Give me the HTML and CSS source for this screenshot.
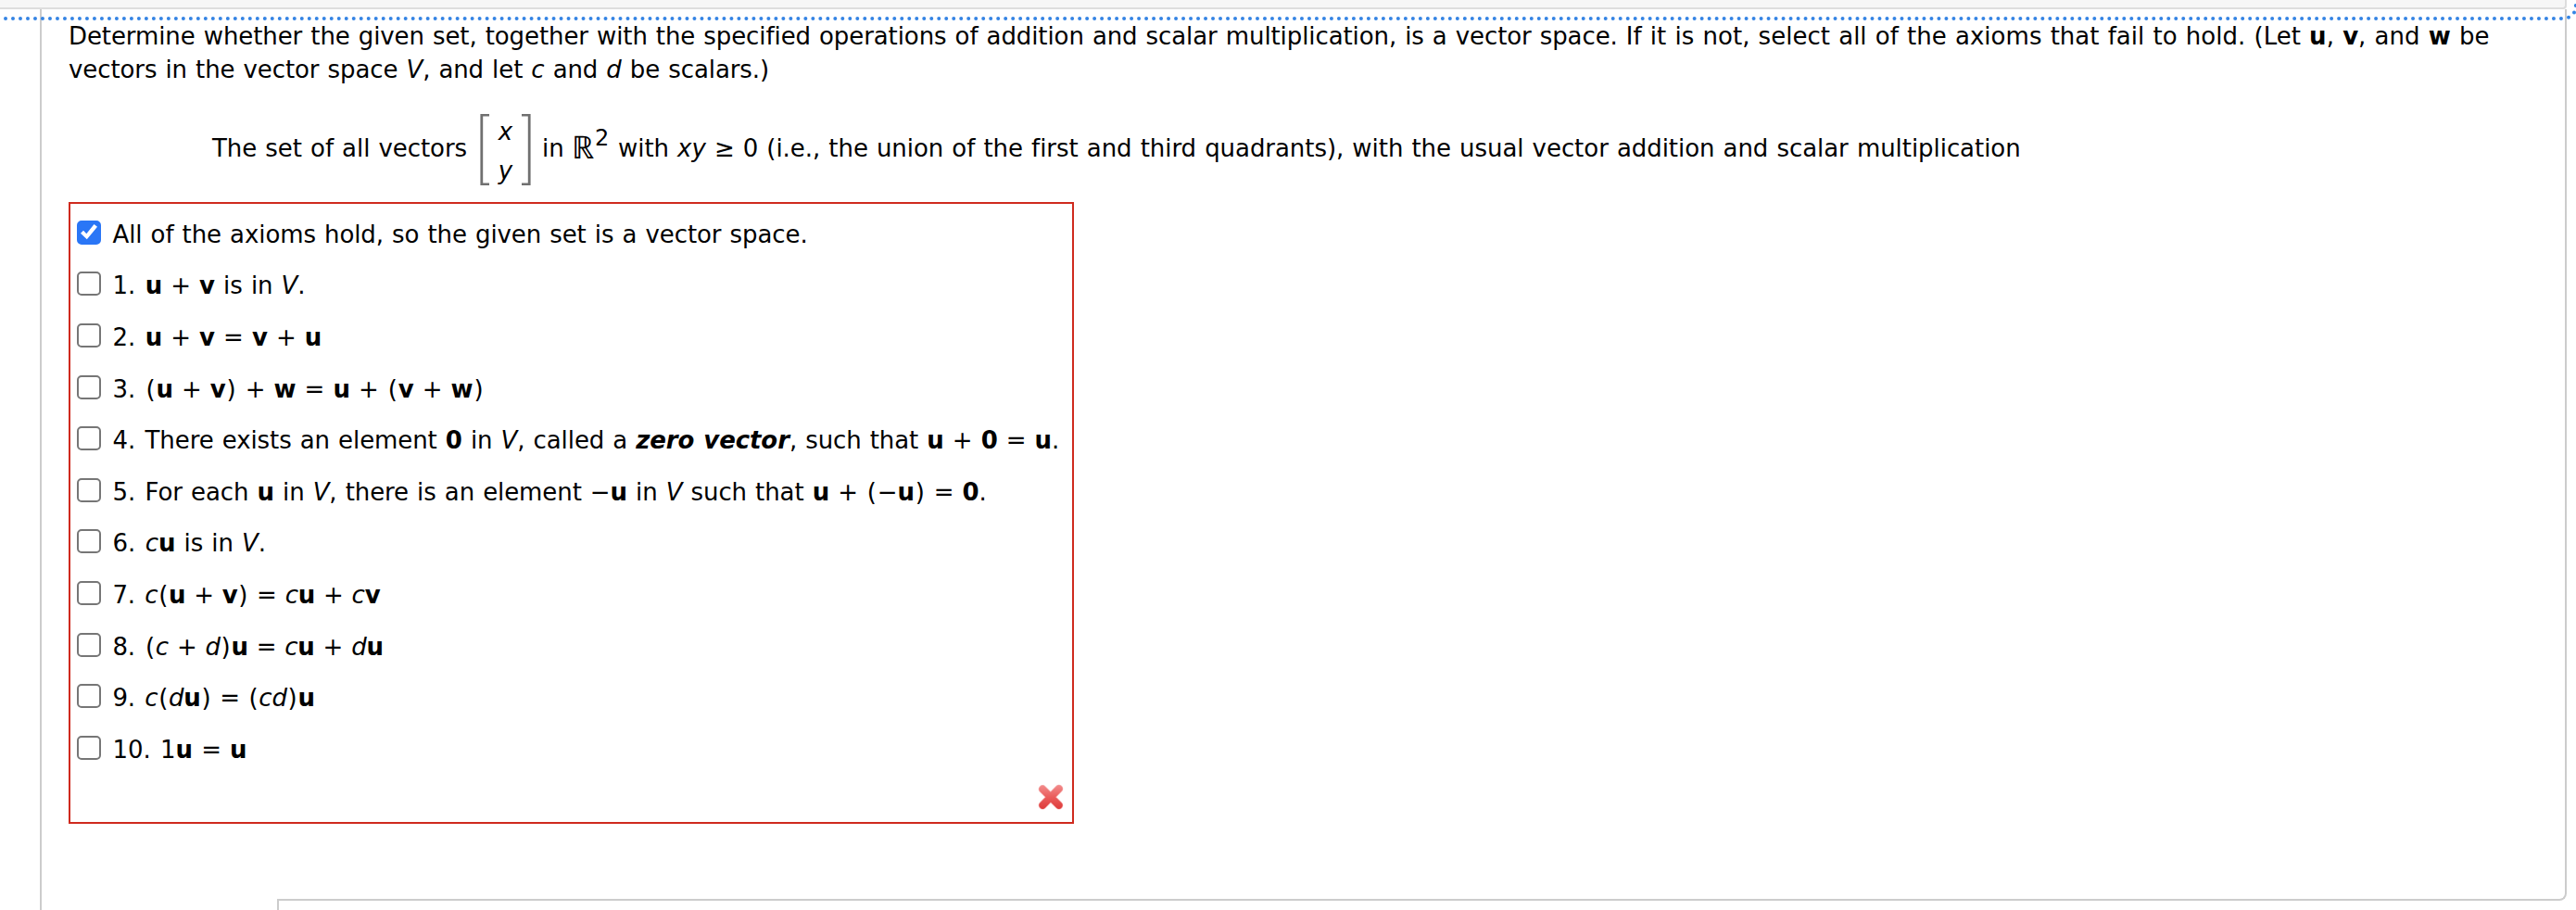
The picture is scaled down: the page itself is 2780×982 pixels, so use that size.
FILE: index.html
```
<!DOCTYPE html>
<html lang="en">
<head>
<meta charset="utf-8">
<title>Vector space axioms</title>
<link rel="stylesheet" href="styles.css">
</head>
<body>
<div class="toolbar"></div>
<main class="question">
  <p class="prompt">Determine whether the given set, together with the specified operations of addition and scalar multiplication, is a vector space. <span class="loose">If it is not, select all of the axioms that fail to hold. (Let <b>u</b>, <b>v</b>, and <b>w</b> be</span><br>vectors in the vector space <i>V</i>, and let <i>c</i> and <i>d</i> be scalars.)</p>
  <div class="formula">
    <span class="lead">The set of all vectors</span>
    <span class="matrix">
      <svg class="bracket" viewBox="0 0 10 77"><path d="M10 1.2H1.8V75.8H10"/></svg>
      <span class="entries"><i>x</i><i>y</i></span>
      <svg class="bracket" viewBox="0 0 10 77"><path d="M0 1.2H8.2V75.8H0"/></svg>
    </span>
    <span class="in">in</span>
    <span class="reals">ℝ</span>
    <span class="power">2</span>
    <span class="rest">with <i>xy</i> ≥ 0 (i.e., the union of the first and third quadrants), with the usual vector addition and scalar multiplication</span>
  </div>
  <div class="answers">
    <label><input type="checkbox" checked><span class="tight">All of the axioms hold, so the given set is a vector space.</span></label>
    <label><input type="checkbox"><span><span class="n">1.</span> <b>u</b> + <b>v</b> is in <i>V</i>.</span></label>
    <label><input type="checkbox"><span><span class="n">2.</span> <b>u</b> + <b>v</b> = <b>v</b> + <b>u</b></span></label>
    <label><input type="checkbox"><span><span class="n">3.</span> <s>(</s><b>u</b> + <b>v</b><s>)</s> + <b>w</b> = <b>u</b> + <s>(</s><b>v</b> + <b>w</b><s>)</s></span></label>
    <label><input type="checkbox"><span class="tight"><span class="n">4.</span> There exists an element <b>0</b> in <i>V</i>, called a <b><i>zero vector</i></b>, such that <b>u</b> + <b>0</b> = <b>u</b>.</span></label>
    <label><input type="checkbox"><span class="tight"><span class="n">5.</span> For each <b>u</b> in <i>V</i>, there is an element −<b>u</b> in <i>V</i> such that <b>u</b> + <s>(</s>−<b>u</b><s>)</s> = <b>0</b>.</span></label>
    <label><input type="checkbox"><span><span class="n">6.</span> <i>c</i><b>u</b> is in <i>V</i>.</span></label>
    <label><input type="checkbox"><span class="tighter"><span class="n">7.</span> <i>c</i><s>(</s><b>u</b> + <b>v</b><s>)</s> = <i>c</i><b>u</b> + <i>c</i><b>v</b></span></label>
    <label><input type="checkbox"><span class="tighter"><span class="n">8.</span> <s>(</s><i>c</i> + <i>d</i><s>)</s><b>u</b> = <i>c</i><b>u</b> + <i>d</i><b>u</b></span></label>
    <label><input type="checkbox"><span class="tighter"><span class="n">9.</span> <i>c</i><s>(</s><i>d</i><b>u</b><s>)</s> = <s>(</s><i>cd</i><s>)</s><b>u</b></span></label>
    <label><input type="checkbox"><span><span class="n">10.</span> 1<b>u</b> = <b>u</b></span></label>
    <svg class="wrong" viewBox="0 0 28 28">
      <defs><linearGradient id="red" x1="0" y1="0" x2="0" y2="28" gradientUnits="userSpaceOnUse"><stop offset="0" stop-color="#f39090"/><stop offset=".5" stop-color="#ea5d5c"/><stop offset="1" stop-color="#dd3837"/></linearGradient></defs>
      <path class="edge" d="M5.2 5.6 22.8 23M22.8 5.2 5.2 23"/>
      <path class="core" d="M5.2 5.6 22.8 23M22.8 5.2 5.2 23"/>
    </svg>
  </div>
</main>
<div class="foot"><div class="rail"></div><div class="corner"></div></div>
<div class="foot last"><div class="rail"></div><div class="next"></div></div>
<svg class="focus" viewBox="0 0 2780 30">
  <path d="M6 20H2765"/>
  <path d="M2772 18.8h0M2778 13.6h0M2779.8 6h0"/>
</svg>
</body>
</html>
```
FILE: styles.css
```
* { box-sizing: border-box; }
html, body { margin: 0; height: 982px; overflow: hidden; background: #fff; }
body {
  position: relative;
  font: 26px/36px "DejaVu Sans", Verdana, sans-serif;
  letter-spacing: -0.05px;
  word-spacing: 0.9px;
  color: #000;
  white-space: nowrap;
}
.toolbar {
  width: 2770px;
  height: 10px;
  background: #f6f6f6;
  border: solid #ddd;
  border-width: 0 2px 2px 0;
  border-bottom-right-radius: 4px;
}
.question {
  width: 2727px;
  height: 952px;
  margin-left: 43px;
  padding: 11px 0 0 29px;
  border: solid #ccc;
  border-width: 0 2px;
}
.prompt { margin: 0; letter-spacing: -0.09px; }
.loose { letter-spacing: 0.02px; }
.tight { letter-spacing: -0.08px; }
.tighter { letter-spacing: -0.2px; }
.formula { display: flex; height: 77px; margin: 30px 0 18px 155px; }
.lead, .in, .reals, .power, .rest { margin-top: 19px; }
.lead { width: 289px; }
.matrix { display: flex; width: 55px; justify-content: space-between; }
.bracket { width: 10px; height: 77px; fill: none; stroke: #707070; stroke-width: 2.8; }
.entries { display: grid; grid-auto-rows: 36px; row-gap: 6px; padding-top: 1px; text-align: center; }
.in { width: 32px; margin-left: 12px; }
.reals { width: 25px; font-family: "Liberation Serif", serif; font-size: 34px; }
.power { width: 25px; margin-top: 8px; font-size: 24px; }
.answers {
  display: flex;
  flex-direction: column;
  width: 1085px;
  height: 671px;
  padding: 5px 0 0 7px;
  border: 2px solid #cf2a1e;
}
label { display: flex; align-items: center; height: 55.6px; gap: 12.5px; }
.n { margin-right: 1.3px; }
input {
  appearance: none;
  position: relative;
  top: -2px;
  width: 26px;
  height: 26px;
  margin: 0;
  border: 2px solid #767676;
  border-radius: 5px;
  background: #fff;
}
input:checked { border-color: #2a76f6; background: #2a76f6; }
input:checked::after {
  content: "";
  position: absolute;
  inset: -2px;
  background: #fff;
  clip-path: polygon(4px 14px, 7px 11px, 10.3px 14.5px, 18.5px 4.3px, 22px 7px, 10.8px 20.5px);
}
/* parentheses inside formulas get a little side room */
s { margin: 0 0.85px; text-decoration: none; }
.wrong { align-self: flex-end; width: 28px; height: 28px; margin: 9px 9px 0 0; fill: none; stroke-linecap: round; }
.edge { stroke: #f6b5b5; stroke-width: 9; }
.core { stroke: url(#red); stroke-width: 7.5; }
.foot { display: flex; height: 10px; margin-left: 43px; }
.rail { width: 256px; border-left: 2px solid #ccc; }
.corner {
  width: 2471px;
  border: solid #ccc;
  border-width: 0 2px 2px 0;
  border-bottom-right-radius: 8px;
}
.next { border-left: 2px solid #ccc; }
.focus {
  position: absolute;
  left: 0;
  top: 0;
  width: 2780px;
  height: 30px;
  fill: none;
  stroke: #3584e4;
  stroke-width: 4;
  stroke-linecap: round;
}
.focus path:first-child { stroke-dasharray: 0 7.994; }
```
